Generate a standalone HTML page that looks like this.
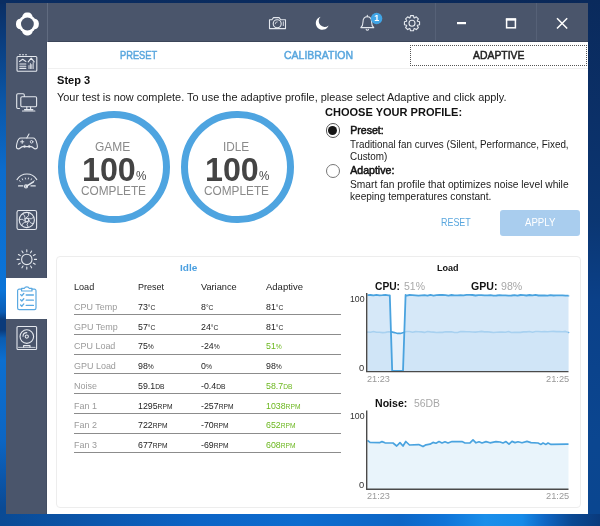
<!DOCTYPE html>
<html><head><meta charset="utf-8"><title>CAM Adaptive</title>
<style>
html,body{margin:0;padding:0}
body{width:600px;height:526px;overflow:hidden;position:relative;font-family:"Liberation Sans",Arial,sans-serif;
 background:#0b5cb4;}
.abs{position:absolute}
.t{position:absolute;white-space:nowrap;line-height:1;transform-origin:0 0}
.u{font-size:0.76em}
</style></head><body>
<div class="abs" style="left:0;top:0;width:600px;height:526px;background:linear-gradient(180deg,#0a2d62 0,#0a3d7e 40px,#0b56a6 100px,#0c6ccc 170px,#0b74d8 290px,#0b5cb4 312px,#0a3a7a 320px,#0a3a7a 330px,#0b5cb0 338px,#0c6fd0 360px,#0c66c4 440px,#0b55a8 480px,#0a4a94 508px,#0a4a94 526px)"></div>
<div class="abs" style="left:0;top:513px;width:600px;height:13px;background:linear-gradient(90deg,#0a4a94 0,#0b57ae 100px,#0c64c6 200px,#0d6ccf 300px,#0d66c6 400px,#0f74d8 445px,#1a8eea 485px,#168ae8 522px,#0f66c4 545px,#0a4892 572px,#0a3a7c 600px)"></div>
<div class="abs" style="left:0;top:0;width:600px;height:4px;background:linear-gradient(90deg,#0a2d62,#0a2858)"></div>
<div class="abs" style="left:580px;top:0;width:20px;height:514px;background:linear-gradient(180deg,#0a2a5c 0,#0b3068 120px,#0b3672 220px,#0b4088 300px,#0b4690 440px,#0a4690 514px)"></div>
<!-- window -->
<div class="abs" style="left:6px;top:3px;width:582px;height:511px;background:#fff"></div>
<div class="abs" style="left:6px;top:3px;width:582px;height:39px;background:#4a556b"></div>
<div class="abs" style="left:48px;top:41px;width:540px;height:1px;background:#3b4559"></div>
<div class="abs" style="left:6px;top:3px;width:41px;height:511px;background:#4a556b"></div>
<div class="abs" style="left:47px;top:3px;width:1px;height:39px;background:#606b80"></div>
<div class="abs" style="left:46px;top:42px;width:1px;height:472px;background:#434e63"></div>
<div class="abs" style="left:435px;top:3px;width:1px;height:38px;background:#566177"></div>
<div class="abs" style="left:536px;top:3px;width:1px;height:38px;background:#566177"></div>
<!-- active side tab -->
<div class="abs" style="left:6px;top:278px;width:41px;height:41px;background:#fff"></div>
<!-- tabs -->
<div class="abs" style="left:48px;top:68px;width:540px;height:1px;background:#f0f0f0"></div>
<div class="abs" style="left:410px;top:45px;width:175px;height:19px;border:1px dotted #555"></div>
<!-- circles -->
<div class="abs" style="left:57.5px;top:110.8px;width:98.5px;height:98.5px;border:7.5px solid #4ea4e0;border-radius:50%"></div>
<div class="abs" style="left:181.2px;top:110.8px;width:98.5px;height:98.5px;border:7.5px solid #4ea4e0;border-radius:50%"></div>
<!-- radios -->
<div class="abs" style="left:325.5px;top:123.4px;width:12.2px;height:12.2px;border:1px solid #555;border-radius:50%;background:#fff"></div>
<div class="abs" style="left:327.8px;top:125.7px;width:9.6px;height:9.6px;border-radius:50%;background:#161616"></div>
<div class="abs" style="left:325.5px;top:163.5px;width:12.2px;height:12.2px;border:1px solid #777;border-radius:50%;background:#fff"></div>
<!-- apply -->
<div class="abs" style="left:500px;top:209.5px;width:80px;height:26px;border-radius:3px;background:#a9cdee"></div>
<!-- panel -->
<div class="abs" style="left:56px;top:255.5px;width:523px;height:250px;border:1px solid #ededed;border-radius:4px;background:#fff"></div>
<div class="abs" style="left:74px;top:314px;width:267px;height:1px;background:#8c8c8c"></div><div class="abs" style="left:74px;top:334px;width:267px;height:1px;background:#8c8c8c"></div><div class="abs" style="left:74px;top:354px;width:267px;height:1px;background:#8c8c8c"></div><div class="abs" style="left:74px;top:373px;width:267px;height:1px;background:#8c8c8c"></div><div class="abs" style="left:74px;top:393px;width:267px;height:1px;background:#8c8c8c"></div><div class="abs" style="left:74px;top:413px;width:267px;height:1px;background:#8c8c8c"></div><div class="abs" style="left:74px;top:433px;width:267px;height:1px;background:#8c8c8c"></div><div class="abs" style="left:74px;top:452px;width:267px;height:1px;background:#8c8c8c"></div>

<svg class="abs" style="left:0;top:0" width="600" height="526" viewBox="0 0 600 526">
 <polygon points="367.5,371 367.5,332 370.5,332.2 373.5,331.5 376.5,332.2 379.5,332.2 382.5,332.6 385.5,332.4 388.5,331.7 391.5,331.9 394.5,332.6 397.5,333.4 400.5,333.4 403.5,332.6 406.5,331.5 409.5,331.5 412.5,332.3 415.5,331.6 418.5,331.7 421.5,331.9 424.5,332.4 427.5,331.5 430.5,331.9 433.5,332.1 436.5,332.5 439.5,332.4 442.5,332.4 445.5,331.7 448.5,331.9 451.5,331.8 454.5,332.5 457.5,332.5 460.5,331.6 463.5,331.6 466.5,331.7 469.5,331.7 472.5,332 475.5,332.1 478.5,331.7 481.5,331.4 484.5,331.9 487.5,331.8 490.5,332.1 493.5,332.5 496.5,332.2 499.5,332 502.5,332.1 505.5,332.2 508.5,331.5 511.5,332.5 514.5,332.3 517.5,332.4 520.5,332.4 523.5,331.9 526.5,331.9 529.5,331.5 532.5,332.2 535.5,331.5 538.5,331.5 541.5,331.7 544.5,331.6 547.5,331.8 550.5,331.5 553.5,331.4 556.5,331.6 559.5,331.5 562.5,331.8 565.5,331.4 568.5,332.4 568.5,332 568.5,371" fill="#e6f1fb"/>
 <polyline points="367.5,332 370.5,332.2 373.5,331.5 376.5,332.2 379.5,332.2 382.5,332.6 385.5,332.4 388.5,331.7 391.5,331.9 394.5,332.6 397.5,333.4 400.5,333.4 403.5,332.6 406.5,331.5 409.5,331.5 412.5,332.3 415.5,331.6 418.5,331.7 421.5,331.9 424.5,332.4 427.5,331.5 430.5,331.9 433.5,332.1 436.5,332.5 439.5,332.4 442.5,332.4 445.5,331.7 448.5,331.9 451.5,331.8 454.5,332.5 457.5,332.5 460.5,331.6 463.5,331.6 466.5,331.7 469.5,331.7 472.5,332 475.5,332.1 478.5,331.7 481.5,331.4 484.5,331.9 487.5,331.8 490.5,332.1 493.5,332.5 496.5,332.2 499.5,332 502.5,332.1 505.5,332.2 508.5,331.5 511.5,332.5 514.5,332.3 517.5,332.4 520.5,332.4 523.5,331.9 526.5,331.9 529.5,331.5 532.5,332.2 535.5,331.5 538.5,331.5 541.5,331.7 544.5,331.6 547.5,331.8 550.5,331.5 553.5,331.4 556.5,331.6 559.5,331.5 562.5,331.8 565.5,331.4 568.5,332.4 568.5,332" fill="none" stroke="#4aa3df" stroke-width="1.6" stroke-linejoin="round"/>
 <polygon points="367.5,371 367.5,295.1 370.5,295 373.5,295.4 376.5,294.9 379.5,295.3 382.5,295.2 385.5,294.9 388.5,295.3 389.8,295.3 392.2,371 403,371 405.6,294.8 406.5,295.6 409.5,295 412.5,295.1 415.5,295.4 418.5,295.7 421.5,295.4 424.5,295.2 427.5,295.7 430.5,294.9 433.5,295.6 436.5,295.1 439.5,295 442.5,295 445.5,295.1 448.5,295.6 451.5,295 454.5,295.4 457.5,295.4 460.5,295.2 463.5,295.3 466.5,294.9 469.5,294.9 472.5,295 475.5,295.5 478.5,295.2 481.5,295.1 484.5,295.4 487.5,295.3 490.5,295.1 493.5,295.6 496.5,295.5 499.5,295.1 502.5,295.4 505.5,295.3 508.5,295.6 511.5,295.5 514.5,295.1 517.5,295.7 520.5,295 523.5,295.2 526.5,295.5 529.5,295 532.5,295.3 535.5,294.9 538.5,295.5 541.5,295.5 544.5,295.4 547.5,295.6 550.5,295.1 553.5,295.5 556.5,295.4 559.5,295.4 562.5,295.3 565.5,295.6 568.5,295.7 568.5,295.6 568.5,371" fill="#c8e0f6" fill-opacity="0.75"/>
 <polyline points="367.5,295.1 370.5,295 373.5,295.4 376.5,294.9 379.5,295.3 382.5,295.2 385.5,294.9 388.5,295.3 389.8,295.3 392.2,371 403,371 405.6,294.8 406.5,295.6 409.5,295 412.5,295.1 415.5,295.4 418.5,295.7 421.5,295.4 424.5,295.2 427.5,295.7 430.5,294.9 433.5,295.6 436.5,295.1 439.5,295 442.5,295 445.5,295.1 448.5,295.6 451.5,295 454.5,295.4 457.5,295.4 460.5,295.2 463.5,295.3 466.5,294.9 469.5,294.9 472.5,295 475.5,295.5 478.5,295.2 481.5,295.1 484.5,295.4 487.5,295.3 490.5,295.1 493.5,295.6 496.5,295.5 499.5,295.1 502.5,295.4 505.5,295.3 508.5,295.6 511.5,295.5 514.5,295.1 517.5,295.7 520.5,295 523.5,295.2 526.5,295.5 529.5,295 532.5,295.3 535.5,294.9 538.5,295.5 541.5,295.5 544.5,295.4 547.5,295.6 550.5,295.1 553.5,295.5 556.5,295.4 559.5,295.4 562.5,295.3 565.5,295.6 568.5,295.7 568.5,295.6" fill="none" stroke="#4aa3df" stroke-width="1.8" stroke-linejoin="round"/>
 <path d="M366.7 293V371.6H568.5" fill="none" stroke="#4a4a4a" stroke-width="1.4"/>
 <polygon points="367.5,489 367.5,440.4 370,442.4 380,442.6 382,441.6 385,442.8 393,443 396.7,446 400,442.6 403,446 405.8,441.5 409.5,445 418.7,444.6 423,446.6 426,444.8 430,444.2 433,442.4 436,443.2 439,441.6 442,443 445,441.8 448,443 452,441.5 462,441.6 465,443 470,442.8 473,439.8 476,442.8 479,441.8 482,443 486,441.6 490,442.8 496,441.6 500,442 503,443 506,441.6 509,444.2 512,441.4 515,442.6 518,441.8 522,442.8 527,441.4 531,442.6 538,443 541,444.4 543,443 546,444.4 548,443 551,444.4 567,444.2 568.5,444.2 568.5,489" fill="#4aa3df" fill-opacity="0.12"/>
 <polyline points="367.5,440.4 370,442.4 380,442.6 382,441.6 385,442.8 393,443 396.7,446 400,442.6 403,446 405.8,441.5 409.5,445 418.7,444.6 423,446.6 426,444.8 430,444.2 433,442.4 436,443.2 439,441.6 442,443 445,441.8 448,443 452,441.5 462,441.6 465,443 470,442.8 473,439.8 476,442.8 479,441.8 482,443 486,441.6 490,442.8 496,441.6 500,442 503,443 506,441.6 509,444.2 512,441.4 515,442.6 518,441.8 522,442.8 527,441.4 531,442.6 538,443 541,444.4 543,443 546,444.4 548,443 551,444.4 567,444.2 568.5,444.2" fill="none" stroke="#4aa3df" stroke-width="1.7" stroke-linejoin="round"/>
 <path d="M366.7 410.5V489.2H568.5" fill="none" stroke="#4a4a4a" stroke-width="1.4"/>
</svg>

<svg class="abs" style="left:0;top:0" width="600" height="526" viewBox="0 0 600 526">
<g fill="#fff"><circle cx="27.4" cy="24" r="9.1"/><rect x="22.2" y="12.6" width="10.4" height="22.8" rx="4.4"/><rect x="15.999999999999998" y="18.8" width="22.8" height="10.4" rx="4.4"/></g><circle cx="27.4" cy="24" r="6.4" fill="#4a556b"/>
<g fill="none" stroke="#e4e8ee" stroke-width="1.1" stroke-linecap="round" stroke-linejoin="round"><rect x="17" y="56.5" width="19.8" height="14.8" rx="1"/><path d="M19.5 54.8h1M22.5 54.8h1M25.5 54.8h1"/><path d="M19.5 61.5l3.2-2.2 3.2 2.2M19.8 64h6M19.8 66.2h6M19.8 68.4h6"/><path d="M28.2 61.8l3-3.6 3 3.6"/><path d="M29 68.6v-3M30.4 68.6v-5M31.8 68.6v-4M33.2 68.6v-6" stroke-width="0.9"/></g>
<g fill="none" stroke="#e4e8ee" stroke-width="1.1" stroke-linecap="round" stroke-linejoin="round"><path d="M19.5 108.5h-1.6a1.2 1.2 0 0 1-1.2-1.2V95a1.2 1.2 0 0 1 1.2-1.2h5.2a1.2 1.2 0 0 1 1.2 1.2v1.4"/><rect x="20.8" y="96.8" width="15.8" height="10" rx="1.2"/><path d="M26.8 107v2.4M30.6 107v2.4M22.5 111h12.4M24.5 109.6h8.4"/></g>
<g fill="none" stroke="#e4e8ee" stroke-width="1.1" stroke-linecap="round" stroke-linejoin="round"><path d="M20.8 138C18.6 138 17.6 140.5 16.9 143.5C16.2 146.5 16 148.9 18.4 148.9C20.2 148.9 21 146.6 22.8 146.6H31C32.8 146.6 33.6 148.9 35.4 148.9C37.8 148.9 37.6 146.5 36.9 143.5C36.2 140.5 35.2 138 33 138Z"/><path d="M26.8 138l2.2-4"/><path d="M20.6 141.8h3.2M22.2 140.2v3.2" stroke-width="1"/><circle cx="31.6" cy="141.8" r="1.3" stroke-width="0.9"/><circle cx="24.6" cy="146.4" r="1" stroke-width="0.8"/><circle cx="29.3" cy="146.4" r="1" stroke-width="0.8"/></g>
<g fill="none" stroke="#e4e8ee" stroke-width="1.1" stroke-linecap="round" stroke-linejoin="round"><path d="M17 179.6c2.4-3.8 5.8-5.6 9.9-5.6s7.5 1.8 9.9 5.6"/><path d="M19.6 180.6l.6.9M22.3 178.8l.4 1M25.3 178l.2 1M28.5 178l-.2 1M31.5 178.8l-.4 1M34.2 180.6l-.6.9" stroke-width="0.9"/><path d="M18.6 185.9h4.2M31 185.9h4.2" stroke-width="1.3"/><path d="M26.2 186.4l7.2-4.6" stroke-width="1.6"/><circle cx="26" cy="186.4" r="1.5"/></g>
<g fill="none" stroke="#e4e8ee" stroke-width="1.1" stroke-linecap="round" stroke-linejoin="round"><rect x="17" y="210.5" width="19.6" height="19" rx="1.8"/><circle cx="26.8" cy="220" r="7.6"/><circle cx="26.8" cy="220" r="1.8"/><path d="M29 220Q30.03 224.07 33.12 223.45" stroke-width="0.9"/><path d="M28.17 221.72Q25.63 225.07 28.04 227.09" stroke-width="0.9"/><path d="M26.31 222.14Q22.11 222.24 22.03 225.39" stroke-width="0.9"/><path d="M24.82 220.95Q22.12 217.73 19.61 219.63" stroke-width="0.9"/><path d="M24.82 219.05Q25.66 214.93 22.6 214.15" stroke-width="0.9"/><path d="M26.31 217.86Q30.05 215.94 28.76 213.07" stroke-width="0.9"/><path d="M28.17 218.28Q32 220.01 33.44 217.21" stroke-width="0.9"/></g>
<g fill="none" stroke="#e4e8ee" stroke-width="1.1" stroke-linecap="round" stroke-linejoin="round"><circle cx="26.8" cy="259.4" r="5.2"/><path d="M26.8 251.8L26.8 249.7"/><path d="M30.6 252.82L31.65 251"/><path d="M33.38 255.6L35.2 254.55"/><path d="M34.4 259.4L36.5 259.4"/><path d="M33.38 263.2L35.2 264.25"/><path d="M30.6 265.98L31.65 267.8"/><path d="M26.8 267L26.8 269.1"/><path d="M23 265.98L21.95 267.8"/><path d="M20.22 263.2L18.4 264.25"/><path d="M19.2 259.4L17.1 259.4"/><path d="M20.22 255.6L18.4 254.55"/><path d="M23 252.82L21.95 251"/></g>
<g fill="none" stroke="#e4e8ee" stroke-width="1.1" stroke-linecap="round" stroke-linejoin="round"><rect x="17" y="326.5" width="19.6" height="23" rx="1"/><circle cx="26.8" cy="336.6" r="6.8"/><circle cx="26.8" cy="336.6" r="1.6"/><path d="M23 336.2a3.8 3.8 0 0 1 3.8-3.6" /><path d="M23.6 347.2v-1.6h6.4v1.6" /><path d="M18.5 347.4h16.6" stroke-width="0.8"/></g>
<g fill="none" stroke="#5aa9e2" stroke-width="1.2" stroke-linecap="round" stroke-linejoin="round">
<path d="M21.5 289.2h-2.3a1.6 1.6 0 0 0-1.6 1.6v17.3a1.6 1.6 0 0 0 1.6 1.6h15.2a1.6 1.6 0 0 0 1.6-1.6v-17.3a1.6 1.6 0 0 0-1.6-1.6h-2.3"/>
<path d="M21.6 288.4h2.8c.3-1 1.2-1.5 2.4-1.5s2.1.5 2.4 1.5h2.8v2.6h-10.4z"/>
<path d="M20.6 294.6l1.2 1.2 2-2.3M20.6 299.8l1.2 1.2 2-2.3M20.6 305l1.2 1.2 2-2.3" stroke-width="1.3"/>
<path d="M26.2 295h7.2M26.2 300.2h7.2M26.2 305.4h7.2" stroke-width="1.3"/></g>

<g fill="none" stroke="#e4e8ee" stroke-width="1.1" stroke-linecap="round" stroke-linejoin="round">
 <!-- camera -->
 <path d="M269.5 19.8h2.4l1.6-2.2h5.6l1.6 2.2h4.8v8.8h-16z"/>
 <circle cx="277.2" cy="23.8" r="4"/><path d="M275.2 23.8a2 2 0 0 1 2-2" stroke-width="0.8"/><path d="M283.3 21.8v3.8" stroke-width="0.9"/>
 <!-- bell -->
 <path d="M360.8 27.6c1.8-1.4 2.2-3 2.2-5.6 0-3 1.6-5.2 4.3-5.2s4.3 2.2 4.3 5.2c0 2.6.4 4.2 2.2 5.6z"/>
 <path d="M366.2 29.4a1.2 1.2 0 0 0 2.3 0M367.3 16.6v-1.3"/>
</g>
<!-- moon -->
<path d="M320.6 16.8a6.6 6.6 0 1 0 8 8.6a5.6 5.6 0 0 1-8-8.6z" fill="#fff"/>
<!-- badge -->
<circle cx="376.6" cy="18.5" r="5.7" fill="#41a5e6"/>
<!-- gear -->
<g fill="none" stroke="#e4e8ee" stroke-width="1.1" stroke-linejoin="round">
 <circle cx="412" cy="23.2" r="3"/>
 <path d="M417.45 21.22L419.56 21.73L419.56 24.67L417.45 25.18L417.26 25.65L418.38 27.51L416.31 29.58L414.45 28.46L413.98 28.65L413.47 30.76L410.53 30.76L410.02 28.65L409.55 28.46L407.69 29.58L405.62 27.51L406.74 25.65L406.55 25.18L404.44 24.67L404.44 21.73L406.55 21.22L406.74 20.75L405.62 18.89L407.69 16.82L409.55 17.94L410.02 17.75L410.53 15.64L413.47 15.64L413.98 17.75L414.45 17.94L416.31 16.82L418.38 18.89L417.26 20.75Z"/>
</g>
<!-- window buttons -->
<rect x="457" y="22" width="9" height="2.2" fill="#fff"/>
<rect x="506.6" y="19.4" width="8.8" height="8.4" fill="none" stroke="#fff" stroke-width="1.5"/><rect x="505.85" y="18.2" width="10.3" height="2.4" fill="#fff"/>
<path d="M557 18.3l10.2 10.2M567.2 18.3l-10.2 10.2" stroke="#fff" stroke-width="1.5" fill="none"/>

</svg>
<div class="abs" style="left:0;top:0;width:600px;height:526px;will-change:transform">
<div class="t" style="left:119.9px;top:50px;font-size:11.2px;font-weight:400;color:#5aa7de;-webkit-text-stroke:0.5px #5aa7de;transform:scaleX(0.831)">PRESET</div>
<div class="t" style="left:283.9px;top:50px;font-size:11.2px;font-weight:400;color:#5aa7de;-webkit-text-stroke:0.5px #5aa7de;transform:scaleX(0.9366)">CALIBRATION</div>
<div class="t" style="left:473px;top:50px;font-size:11.2px;font-weight:400;color:#222;-webkit-text-stroke:0.5px #222;transform:scaleX(0.9305)">ADAPTIVE</div>
<div class="t" style="left:57px;top:75px;font-size:10.8px;font-weight:700;color:#111;transform:scaleX(1.0245)">Step 3</div>
<div class="t" style="left:57px;top:92px;font-size:10.8px;font-weight:400;color:#1c1c1c;transform:scaleX(1.0125)">Your test is now complete. To use the adaptive profile, please select Adaptive and click apply.</div>
<div class="t" style="left:95.4px;top:141px;font-size:12.6px;font-weight:400;color:#8a8a8a;transform:scaleX(0.9516)">GAME</div>
<div class="t" style="left:81.8px;top:154px;font-size:32.5px;font-weight:700;color:#444;transform:scaleX(0.992)">100</div>
<div class="t" style="left:135.8px;top:169px;font-size:13px;font-weight:400;color:#444;transform:scaleX(0.8995)">%</div>
<div class="t" style="left:80.7px;top:185px;font-size:12.6px;font-weight:400;color:#8a8a8a;transform:scaleX(0.9382)">COMPLETE</div>
<div class="t" style="left:223.3px;top:141px;font-size:12.6px;font-weight:400;color:#8a8a8a;transform:scaleX(0.9357)">IDLE</div>
<div class="t" style="left:205.4px;top:154px;font-size:32.5px;font-weight:700;color:#444;transform:scaleX(0.992)">100</div>
<div class="t" style="left:259.4px;top:169px;font-size:13px;font-weight:400;color:#444;transform:scaleX(0.8995)">%</div>
<div class="t" style="left:204.3px;top:185px;font-size:12.6px;font-weight:400;color:#8a8a8a;transform:scaleX(0.9382)">COMPLETE</div>
<div class="t" style="left:325.1px;top:107px;font-size:11.3px;font-weight:700;color:#111;transform:scaleX(0.9766)">CHOOSE YOUR PROFILE:</div>
<div class="t" style="left:350.2px;top:125px;font-size:10.6px;font-weight:400;color:#111;-webkit-text-stroke:0.5px #111;transform:scaleX(1)">Preset:</div>
<div class="t" style="left:349.9px;top:140px;font-size:10.2px;font-weight:400;color:#1c1c1c;transform:scaleX(0.9668)">Traditional fan curves (Silent, Performance, Fixed,</div>
<div class="t" style="left:350.4px;top:152px;font-size:10.2px;font-weight:400;color:#1c1c1c;transform:scaleX(0.97)">Custom)</div>
<div class="t" style="left:350.2px;top:165px;font-size:10.6px;font-weight:400;color:#111;-webkit-text-stroke:0.5px #111;transform:scaleX(1)">Adaptive:</div>
<div class="t" style="left:349.9px;top:180px;font-size:10.2px;font-weight:400;color:#1c1c1c;transform:scaleX(1.0053)">Smart fan profile that optimizes noise level while</div>
<div class="t" style="left:350.4px;top:192px;font-size:10.2px;font-weight:400;color:#1c1c1c;transform:scaleX(0.99)">keeping temperatures constant.</div>
<div class="t" style="left:441.1px;top:217px;font-size:11.2px;font-weight:400;color:#5aa7de;transform:scaleX(0.7987)">RESET</div>
<div class="t" style="left:525.1px;top:217px;font-size:11.2px;font-weight:400;color:#fff;transform:scaleX(0.8624)">APPLY</div>
<div class="t" style="left:179.5px;top:263px;font-size:9.8px;font-weight:700;color:#4a9fe0;transform:scaleX(1.0242)">Idle</div>
<div class="t" style="left:436.9px;top:263px;font-size:9.8px;font-weight:700;color:#111;transform:scaleX(0.9228)">Load</div>
<div class="t" style="left:73.9px;top:282px;font-size:9.8px;font-weight:400;color:#1c1c1c;transform:scaleX(0.9267)">Load</div>
<div class="t" style="left:137.5px;top:282px;font-size:9.8px;font-weight:400;color:#1c1c1c;transform:scaleX(0.9178)">Preset</div>
<div class="t" style="left:200.8px;top:282px;font-size:9.8px;font-weight:400;color:#1c1c1c;transform:scaleX(0.938)">Variance</div>
<div class="t" style="left:265.5px;top:282px;font-size:9.8px;font-weight:400;color:#1c1c1c;transform:scaleX(0.9701)">Adaptive</div>
<div class="t" style="left:74.4px;top:302px;font-size:9.8px;font-weight:400;color:#9a9a9a;transform:scaleX(0.915)">CPU Temp</div>
<div class="t" style="left:138px;top:302px;font-size:9.8px;font-weight:400;color:#1c1c1c;transform:scaleX(0.9)">73<span class="u">°C</span></div>
<div class="t" style="left:201.3px;top:302px;font-size:9.8px;font-weight:400;color:#1c1c1c;transform:scaleX(0.9)">8<span class="u">°C</span></div>
<div class="t" style="left:266px;top:302px;font-size:9.8px;font-weight:400;color:#1c1c1c;transform:scaleX(0.9)">81<span class="u">°C</span></div>
<div class="t" style="left:74.4px;top:322px;font-size:9.8px;font-weight:400;color:#9a9a9a;transform:scaleX(0.915)">GPU Temp</div>
<div class="t" style="left:138px;top:322px;font-size:9.8px;font-weight:400;color:#1c1c1c;transform:scaleX(0.9)">57<span class="u">°C</span></div>
<div class="t" style="left:201.3px;top:322px;font-size:9.8px;font-weight:400;color:#1c1c1c;transform:scaleX(0.9)">24<span class="u">°C</span></div>
<div class="t" style="left:266px;top:322px;font-size:9.8px;font-weight:400;color:#1c1c1c;transform:scaleX(0.9)">81<span class="u">°C</span></div>
<div class="t" style="left:74.4px;top:341px;font-size:9.8px;font-weight:400;color:#9a9a9a;transform:scaleX(0.915)">CPU Load</div>
<div class="t" style="left:138px;top:341px;font-size:9.8px;font-weight:400;color:#1c1c1c;transform:scaleX(0.9)">75<span class="u">%</span></div>
<div class="t" style="left:201.3px;top:341px;font-size:9.8px;font-weight:400;color:#1c1c1c;transform:scaleX(0.9)">-24<span class="u">%</span></div>
<div class="t" style="left:266px;top:341px;font-size:9.8px;font-weight:400;color:#6cb71f;transform:scaleX(0.9)">51<span class="u">%</span></div>
<div class="t" style="left:74.4px;top:361px;font-size:9.8px;font-weight:400;color:#9a9a9a;transform:scaleX(0.915)">GPU Load</div>
<div class="t" style="left:138px;top:361px;font-size:9.8px;font-weight:400;color:#1c1c1c;transform:scaleX(0.9)">98<span class="u">%</span></div>
<div class="t" style="left:201.3px;top:361px;font-size:9.8px;font-weight:400;color:#1c1c1c;transform:scaleX(0.9)">0<span class="u">%</span></div>
<div class="t" style="left:266px;top:361px;font-size:9.8px;font-weight:400;color:#1c1c1c;transform:scaleX(0.9)">98<span class="u">%</span></div>
<div class="t" style="left:74.4px;top:381px;font-size:9.8px;font-weight:400;color:#9a9a9a;transform:scaleX(0.915)">Noise</div>
<div class="t" style="left:138px;top:381px;font-size:9.8px;font-weight:400;color:#1c1c1c;transform:scaleX(0.9)">59.1<span class="u">DB</span></div>
<div class="t" style="left:201.3px;top:381px;font-size:9.8px;font-weight:400;color:#1c1c1c;transform:scaleX(0.9)">-0.4<span class="u">DB</span></div>
<div class="t" style="left:266px;top:381px;font-size:9.8px;font-weight:400;color:#6cb71f;transform:scaleX(0.9)">58.7<span class="u">DB</span></div>
<div class="t" style="left:74.4px;top:401px;font-size:9.8px;font-weight:400;color:#9a9a9a;transform:scaleX(0.915)">Fan 1</div>
<div class="t" style="left:138px;top:401px;font-size:9.8px;font-weight:400;color:#1c1c1c;transform:scaleX(0.9)">1295<span class="u">RPM</span></div>
<div class="t" style="left:201.3px;top:401px;font-size:9.8px;font-weight:400;color:#1c1c1c;transform:scaleX(0.9)">-257<span class="u">RPM</span></div>
<div class="t" style="left:266px;top:401px;font-size:9.8px;font-weight:400;color:#6cb71f;transform:scaleX(0.9)">1038<span class="u">RPM</span></div>
<div class="t" style="left:74.4px;top:420px;font-size:9.8px;font-weight:400;color:#9a9a9a;transform:scaleX(0.915)">Fan 2</div>
<div class="t" style="left:138px;top:420px;font-size:9.8px;font-weight:400;color:#1c1c1c;transform:scaleX(0.9)">722<span class="u">RPM</span></div>
<div class="t" style="left:201.3px;top:420px;font-size:9.8px;font-weight:400;color:#1c1c1c;transform:scaleX(0.9)">-70<span class="u">RPM</span></div>
<div class="t" style="left:266px;top:420px;font-size:9.8px;font-weight:400;color:#6cb71f;transform:scaleX(0.9)">652<span class="u">RPM</span></div>
<div class="t" style="left:74.4px;top:440px;font-size:9.8px;font-weight:400;color:#9a9a9a;transform:scaleX(0.915)">Fan 3</div>
<div class="t" style="left:138px;top:440px;font-size:9.8px;font-weight:400;color:#1c1c1c;transform:scaleX(0.9)">677<span class="u">RPM</span></div>
<div class="t" style="left:201.3px;top:440px;font-size:9.8px;font-weight:400;color:#1c1c1c;transform:scaleX(0.9)">-69<span class="u">RPM</span></div>
<div class="t" style="left:266px;top:440px;font-size:9.8px;font-weight:400;color:#6cb71f;transform:scaleX(0.9)">608<span class="u">RPM</span></div>
<div class="t" style="left:375.1px;top:281px;font-size:10.6px;font-weight:700;color:#111;transform:scaleX(0.965)">CPU:</div>
<div class="t" style="left:403.9px;top:281px;font-size:10.6px;font-weight:400;color:#a8a8a8;transform:scaleX(0.9904)">51%</div>
<div class="t" style="left:471.4px;top:281px;font-size:10.6px;font-weight:700;color:#111;transform:scaleX(0.9968)">GPU:</div>
<div class="t" style="left:501.1px;top:281px;font-size:10.6px;font-weight:400;color:#a8a8a8;transform:scaleX(0.9999)">98%</div>
<div class="t" style="left:374.9px;top:398px;font-size:10.6px;font-weight:700;color:#111;transform:scaleX(0.9972)">Noise:</div>
<div class="t" style="left:413.5px;top:398px;font-size:10.6px;font-weight:400;color:#a8a8a8;transform:scaleX(0.9811)">56DB</div>
<div class="t" style="left:349.5px;top:295px;font-size:8.9px;font-weight:400;color:#333;transform:scaleX(0.9857)">100</div>
<div class="t" style="left:358.9px;top:364px;font-size:8.9px;font-weight:400;color:#333;transform:scaleX(1.0532)">0</div>
<div class="t" style="left:367px;top:375px;font-size:8.9px;font-weight:400;color:#999;transform:scaleX(1.0307)">21:23</div>
<div class="t" style="left:545.8px;top:375px;font-size:8.9px;font-weight:400;color:#999;transform:scaleX(1.0442)">21:25</div>
<div class="t" style="left:349.5px;top:412px;font-size:8.9px;font-weight:400;color:#333;transform:scaleX(0.9857)">100</div>
<div class="t" style="left:358.9px;top:481px;font-size:8.9px;font-weight:400;color:#333;transform:scaleX(1.0532)">0</div>
<div class="t" style="left:367px;top:492px;font-size:8.9px;font-weight:400;color:#999;transform:scaleX(1.0307)">21:23</div>
<div class="t" style="left:545.8px;top:492px;font-size:8.9px;font-weight:400;color:#999;transform:scaleX(1.0442)">21:25</div>
<div class="t" style="left:374.3px;top:14px;font-size:9px;font-weight:700;color:#fff">1</div>
</div>
</body></html>
